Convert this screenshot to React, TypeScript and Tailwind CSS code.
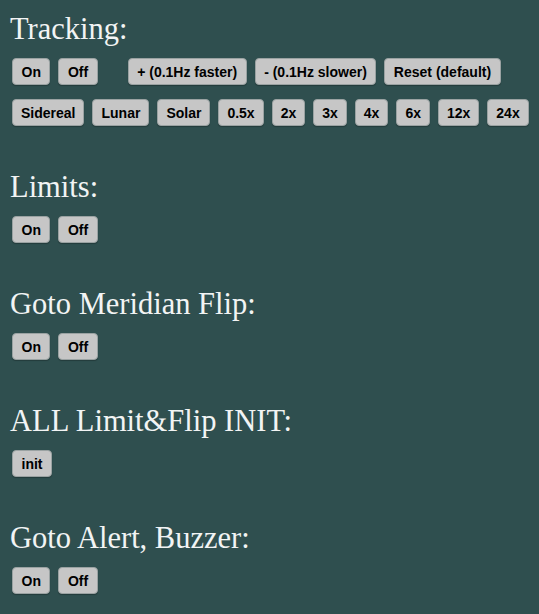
const trackRow1a = ["On", "Off"];
const trackRow1b = ["+ (0.1Hz faster)", "- (0.1Hz slower)", "Reset (default)"];
const trackRow2 = ["Sidereal", "Lunar", "Solar", "0.5x", "2x", "3x", "4x", "6x", "12x", "24x"];

function Btn({ label, className = "" }: { label: string; className?: string }) {
  return (
    <button
      type="button"
      className={`h-[27px] rounded-[4px] border border-[#9aa2a2] bg-[#c6c6c6] text-[14px] font-bold leading-none text-black font-['Liberation_Sans',Arial,sans-serif] shadow-[0_1px_1px_rgba(0,0,0,0.25)] ${className}`}
    >
      {label}
    </button>
  );
}

function Heading({ children }: { children: React.ReactNode }) {
  return (
    <h2 className="h-[34px] leading-[34px] mb-[12px] text-[30.5px] text-[#f2f4f4] font-['Liberation_Serif','Times_New_Roman',serif]">
      {children}
    </h2>
  );
}

function Section({ title, buttons }: { title: string; buttons: string[] }) {
  return (
    <section className="mt-[44px]">
      <Heading>{title}</Heading>
      <div className="flex gap-[8px] pl-[2px]">
        {buttons.map((b) => (
          <Btn key={b} label={b} className="px-[8.5px]" />
        ))}
      </div>
    </section>
  );
}

export default function App() {
  return (
    <div className="min-h-[614px] w-full bg-[#2f4f4f] pl-[10px] pt-[12px] pb-[20px]">
      <section>
        <Heading>Tracking:</Heading>
        <div className="flex flex-col gap-[14px] pl-[2px]">
          <div className="flex gap-[8px]">
            {trackRow1a.map((b) => (
              <Btn key={b} label={b} className="px-[8.5px]" />
            ))}
            <div className="w-[14px]" />
            {trackRow1b.map((b) => (
              <Btn key={b} label={b} className="px-[8.5px]" />
            ))}
          </div>
          <div className="flex gap-[8px]">
            {trackRow2.map((b) => (
              <Btn key={b} label={b} className="px-[8px]" />
            ))}
          </div>
        </div>
      </section>
      <Section title="Limits:" buttons={["On", "Off"]} />
      <Section title="Goto Meridian Flip:" buttons={["On", "Off"]} />
      <Section title="ALL Limit&Flip INIT:" buttons={["init"]} />
      <Section title="Goto Alert, Buzzer:" buttons={["On", "Off"]} />
    </div>
  );
}
